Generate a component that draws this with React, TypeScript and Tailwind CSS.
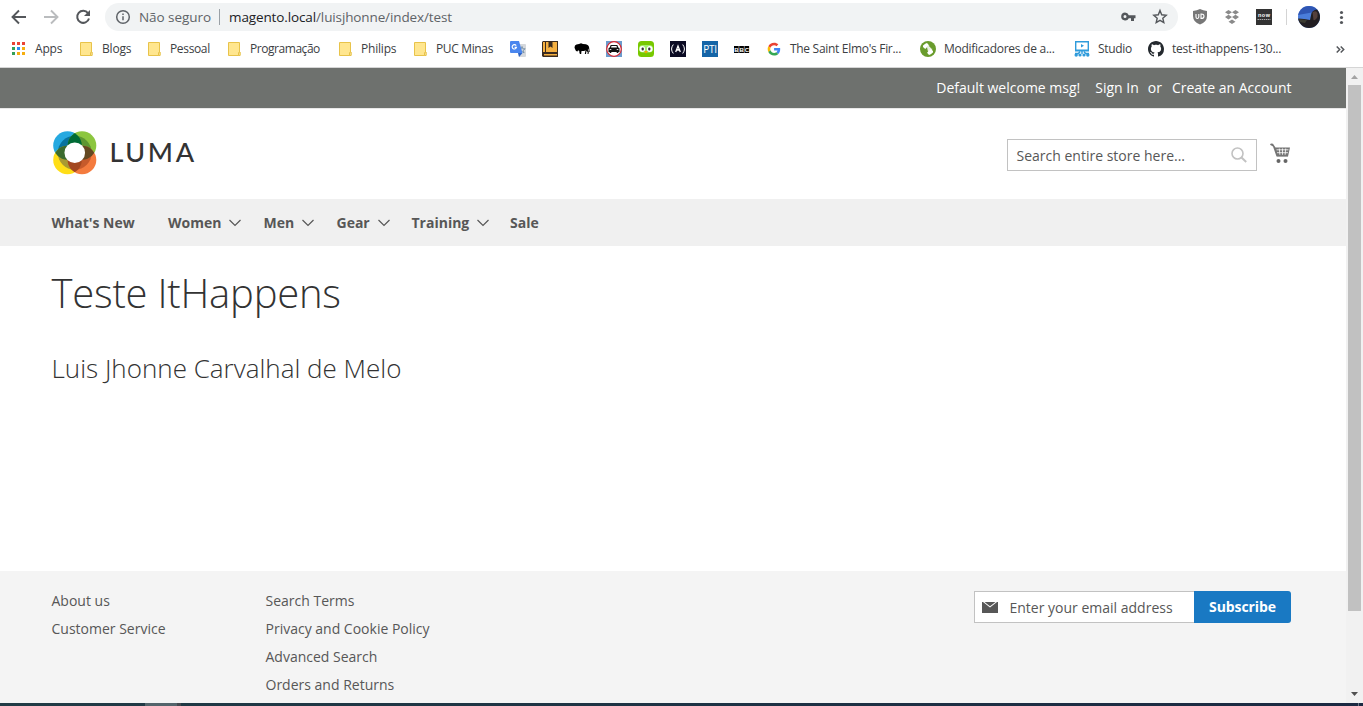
import React from "react";
import type { ReactNode } from "react";

const Folder = () => (
  <svg width="16" height="16" viewBox="0 0 16 16">
    <path d="M2.500 1.500h11v9.500l.5.5v3H2.500z" fill="#ffe68f" stroke="#e8c34a" />
    <path d="M12.500 14.500v-3l1.500-.5v3.500z" fill="#fff0b8" stroke="#e8c34a" />
  </svg>
);

const AppsIcon = () => (
  <svg width="16" height="16" viewBox="0 0 16 16">
    {["#ea4335", "#ea4335", "#ea4335", "#34a058", "#2a8bf2", "#f6ae10", "#34a058", "#f6ae10", "#f6ae10"].map((c, i) => (
      <rect key={i} x={1 + (i % 3) * 5} y={1 + Math.floor(i / 3) * 5} width="3" height="3" fill={c} />
    ))}
  </svg>
);

const Translate = () => (
  <svg width="16" height="16" viewBox="0 0 16 16">
    <path d="M6 3h9q1 0 1 1v11q0 1-1 1H9z" fill="#d5d8dc" />
    <path d="M12 5.500l.8 2.300h2.400l-2 1.500.9 2.700-2.100-1.600L9.800 12l.9-2.700-2-1.500h2.500z" fill="none" stroke="#7590a6" strokeWidth=".9" />
    <path d="M1 0h8l3.500 12H1q-1 0-1-1V1q0-1 1-1z" fill="#4a86ee" />
    <path d="M8 12h4.500L9 16z" fill="#2e63c4" />
    <path d="M6.200 4.600A2.200 2.200 0 1 0 6.500 6.400H4.600" fill="none" stroke="#fff" strokeWidth="1.100" />
  </svg>
);

const Book = () => (
  <svg width="16" height="16" viewBox="0 0 16 16">
    <path d="M1 0h15v16H1l-1-1V1z" fill="#3b2b20" />
    <path d="M4 1h11v10H4z" fill="#f5b041" />
    <path d="M1 1h2v10H1zM2 13h13v1.500H2z" fill="#f5b041" />
    <path d="M6.500 1h4v6l-2-1.500-2 1.500z" fill="#3b2b20" />
  </svg>
);

const Bison = () => (
  <svg width="16" height="16" viewBox="0 0 16 16">
    <path d="M.5 6.500l.5-2 1.500-1L5 3l2-.8 2 .8 3 .3 2 1 1 1.500.7 5.200h-.8l-.6-3.500-.5 1.500 1 2-.3 2h-1l.2-2-2-1.500-2 .5-2.500 0-.7 2.500h-1L5.300 10l-1.200-.7L3.500 10.500 2 10 1 8z" fill="#000" />
    <path d="M6 9.500h1.500L7.200 13H6zM11.500 9.500h1L12 13h-1.200z" fill="#000" />
  </svg>
);

const Car = () => (
  <svg width="16" height="16" viewBox="0 0 16 16">
    <rect width="16" height="16" fill="#6b9bcd" />
    <circle cx="8" cy="8" r="7.300" fill="#fff" stroke="#d8262e" strokeWidth="1.200" />
    <path d="M4.700 4h6.600l1 2.500 1.200.8V11h-1.200v1h-1.600v-1H5.300v1H3.700v-1H2.500V7.300l1.200-.8z" fill="#111" />
    <path d="M5.500 5h5l.5 1.500H5z" fill="#fff" />
    <path d="M3.700 8h1.600v1H3.700zM10.700 8h1.600v1h-1.600z" fill="#ddd" />
  </svg>
);

const Duo = () => (
  <svg width="16" height="16" viewBox="0 0 16 16">
    <rect width="16" height="16" rx="3.500" fill="#78c800" />
    <rect x="1" y="4" width="14" height="7.500" rx="3.700" fill="#a5ed6e" />
    <rect x="1.500" y="5" width="5.500" height="6" rx="2.700" fill="#fff" />
    <rect x="9" y="5" width="5.500" height="6" rx="2.700" fill="#fff" />
    <rect x="3.600" y="6.500" width="2.200" height="3" rx="1" fill="#333" />
    <rect x="10.200" y="6.500" width="2.200" height="3" rx="1" fill="#333" />
    <path d="M6.200 10.500Q8 9 9.800 10.500L8 12.500z" fill="#f7a400" />
  </svg>
);

const Fcc = () => (
  <svg width="16" height="16" viewBox="0 0 16 16">
    <rect width="16" height="16" fill="#0a0a23" />
    <path d="M3.300 3.500Q-.2 8 3.300 12.500M12.700 3.500Q16.200 8 12.700 12.500" fill="none" stroke="#fff" strokeWidth="1" />
    <path d="M5.700 11L8 5l2.300 6M8 8v2" fill="none" stroke="#fff" strokeWidth="1.300" />
  </svg>
);

const Pti = () => (
  <span className="flex h-4 w-4 items-center justify-center bg-[#1565a7] font-['Open_Sans',sans-serif] text-[10px] leading-none tracking-[-0.2px] text-white">PTI</span>
);

const Bbc = () => (
  <svg width="16" height="16" viewBox="0 0 16 16">
    <rect y="5" width="4.700" height="7" fill="#000" />
    <rect x="5.200" y="5" width="4.700" height="7" fill="#000" />
    <rect x="10.400" y="5" width="4.700" height="7" fill="#000" />
    <g fill="#fff" fontFamily="Liberation Sans" fontSize="6" fontWeight="700" textAnchor="middle">
      <text x="2.400" y="10.700">B</text>
      <text x="7.600" y="10.700">B</text>
      <text x="12.800" y="10.700">C</text>
    </g>
  </svg>
);

const Google = () => (
  <svg width="16" height="16" viewBox="0 0 48 48">
    <g transform="translate(5 5) scale(.8)">
      <path fill="#EA4335" d="M24 9.500c3.540 0 6.710 1.220 9.210 3.600l6.850-6.850C35.900 2.380 30.470 0 24 0 14.620 0 6.510 5.380 2.560 13.220l7.980 6.190C12.430 13.720 17.740 9.500 24 9.500z" />
      <path fill="#4285F4" d="M46.980 24.550c0-1.570-.15-3.090-.38-4.550H24v9.020h12.940c-.58 2.960-2.260 5.480-4.780 7.180l7.730 6c4.510-4.180 7.090-10.360 7.090-17.650z" />
      <path fill="#FBBC05" d="M10.530 28.590c-.48-1.450-.76-2.990-.76-4.590s.27-3.140.76-4.590l-7.980-6.190C.92 16.460 0 20.120 0 24s.92 7.540 2.560 10.780l7.970-6.190z" />
      <path fill="#34A853" d="M24 48c6.480 0 11.930-2.130 15.890-5.810l-7.730-6c-2.150 1.450-4.920 2.300-8.160 2.300-6.260 0-11.570-4.220-13.470-9.910l-7.980 6.190C6.510 42.620 14.620 48 24 48z" />
    </g>
  </svg>
);

const Swirl = () => (
  <svg width="16" height="16" viewBox="0 0 16 16">
    <circle cx="8" cy="8" r="8" fill="#6a9c2d" />
    <path d="M3 3.500l4-1.500L9 4.200 5.200 8 3 6z" fill="#fff" />
    <path d="M13 12.500L9 14l-2-2.200L10.800 8 13 10z" fill="#fff" />
    <path d="M7 6l2-1.800L12.500 8 9 11.800 7.800 10z" fill="#fff" opacity=".85" />
    <path d="M2 4.500L5 2M14 11.500L11 14M9.500 4.500l3 3M6.500 11.500l-3-3" stroke="#6a9c2d" strokeWidth="1.600" />
  </svg>
);

const Studio = () => (
  <svg width="16" height="16" viewBox="0 0 16 16">
    <path d="M1.700.7h12.600v9H1.700z" fill="#fff" stroke="#2f9bdb" strokeWidth="1.400" />
    <path d="M7 3l3 1.700-3 1.700z" fill="#2f9bdb" />
    <path d="M1 8.500h14V10H1zM7.300 9h1.400v4H7.300z" fill="#2f9bdb" />
    <path d="M1 12.500h3.500L6 10.500M15 12.500h-3.500L10 10.500" stroke="#2f9bdb" strokeWidth="1.500" fill="none" />
    <circle cx="2.200" cy="14" r="1.700" fill="#2f9bdb" />
    <circle cx="6" cy="14" r="1.600" fill="#2f9bdb" />
    <circle cx="10" cy="14" r="1.600" fill="#2f9bdb" />
    <circle cx="13.800" cy="14" r="1.700" fill="#2f9bdb" />
  </svg>
);

const Github = () => (
  <svg width="16" height="16" viewBox="0 0 16 16">
    <path fill="#24292e" d="M8 0C3.580 0 0 3.580 0 8c0 3.540 2.290 6.530 5.470 7.590.4.070.55-.17.55-.38 0-.19-.01-.82-.01-1.490-2.010.37-2.530-.49-2.690-.94-.09-.23-.48-.94-.82-1.130-.28-.15-.68-.52-.01-.53.63-.01 1.080.58 1.230.82.72 1.210 1.870.87 2.330.66.07-.52.28-.87.51-1.070-1.780-.2-3.640-.89-3.640-3.950 0-.87.31-1.590.82-2.150-.08-.2-.36-1.020.08-2.120 0 0 .67-.21 2.200.82.640-.18 1.320-.27 2-.27s1.360.09 2 .27c1.530-1.040 2.200-.82 2.200-.82.44 1.100.16 1.920.08 2.120.51.56.82 1.270.82 2.150 0 3.070-1.870 3.750-3.650 3.950.29.25.54.73.54 1.480 0 1.070-.01 1.930-.01 2.200 0 .21.15.46.55.38A8.010 8.010 0 0 0 16 8c0-4.420-3.580-8-8-8z" />
  </svg>
);

const bookmarks: { icon: ReactNode; label?: string; cls: string }[] = [
  { icon: <AppsIcon />, label: "Apps", cls: "w-[67px]" },
  { icon: <Folder />, label: "Blogs", cls: "w-[68px]" },
  { icon: <Folder />, label: "Pessoal", cls: "w-[80px] tracking-[-0.350px]" },
  { icon: <Folder />, label: "Programação", cls: "w-[111px] tracking-[-0.450px]" },
  { icon: <Folder />, label: "Philips", cls: "w-[75px]" },
  { icon: <Folder />, label: "PUC Minas", cls: "w-[98px] tracking-[-0.350px]" },
  { icon: <Translate />, cls: "w-8" },
  { icon: <Book />, cls: "w-8" },
  { icon: <Bison />, cls: "w-8" },
  { icon: <Car />, cls: "w-8" },
  { icon: <Duo />, cls: "w-8" },
  { icon: <Fcc />, cls: "w-8" },
  { icon: <Pti />, cls: "w-8" },
  { icon: <Bbc />, cls: "w-8" },
  { icon: <Google />, label: "The Saint Elmo's Fir...", cls: "w-[154px] tracking-[-0.300px]" },
  { icon: <Swirl />, label: "Modificadores de a...", cls: "w-[154px] tracking-[-0.270px]" },
  { icon: <Studio />, label: "Studio", cls: "w-[74px] tracking-[-0.300px]" },
  { icon: <Github />, label: "test-ithappens-130...", cls: "w-[188px] tracking-[-0.260px]" },
];

const Toolbar = () => (
  <div className="flex h-[34px] shrink-0 items-center">
    <svg className="shrink-0" width="105" height="34" viewBox="0 0 105 34" fill="none" strokeWidth="1.900">
      <path d="M26 17H13M19 10.500L12.500 17l6.500 6.500" stroke="#54575b" />
      <path d="M44 17h13M51 10.500l6.500 6.500-6.500 6.500" stroke="#babcbe" />
      <path d="M88 13.200A6 6 0 1 0 89 18.500" stroke="#54575b" strokeWidth="2" />
      <path d="M90 10v6h-6z" fill="#54575b" />
    </svg>
    <div className="mb-[1px] flex h-7 w-[1073px] shrink-0 items-center rounded-full bg-[#f1f3f4] pl-[10px] font-['Open_Sans',sans-serif] text-[13.500px]">
      <svg className="shrink-0" width="16" height="16" viewBox="0 0 16 16" fill="none" stroke="#5f6368" strokeWidth="1.500">
        <circle cx="8" cy="8" r="6.300" />
        <path d="M8 7.200v4M8 4.500V6" />
      </svg>
      <span className="ml-2 w-[72px] shrink-0 pt-[2px] tracking-[-0.050px] whitespace-nowrap text-[#5f6368]">Não seguro</span>
      <span className="ml-2 h-4 w-px shrink-0 bg-[#9aa0a6]" />
      <span className="ml-[9px] pt-[2px] tracking-[-0.120px] whitespace-nowrap text-[#5f6368]"><span className="text-[#202124]">magento.local</span>/luisjhonne/index/test</span>
      <span className="grow" />
      <svg className="shrink-0" width="58" height="28" viewBox="0 0 58 28">
        <path fillRule="evenodd" d="M5 9.500a4 4 0 0 1 3.800 2.700H15.500v3H14V18h-3v-2.800H8.800A4 4 0 1 1 5 9.500zm0 2.600a1.500 1.500 0 1 0 0 3 1.500 1.500 0 0 0 0-3z" fill="#54575b" />
        <path d="M40 7.500l1.700 4.300 4.500.4-3.400 3 1 4.400-3.800-2.300-3.800 2.300 1-4.400-3.400-3 4.500-.4z" fill="none" stroke="#54575b" strokeWidth="1.400" />
      </svg>
    </div>
    <svg className="shrink-0" width="185" height="34" viewBox="1178 0 185 34">
      <path d="M1193 11q4-.5 7-2 3 1.500 7 2v5q0 6-7 8.500-7-2.500-7-8.500z" fill="#777" />
      <path d="M1196 14v3q0 1.500 1.300 1.500t1.500-1.500v-3M1201 14v4.500q3 0 3-2.300t-3-2.200z" fill="none" stroke="#fff" strokeWidth="1.100" />
      <path d="M1228.500 10l3.500 2.300-3.500 2.300-3.500-2.300zM1235.500 10l3.500 2.300-3.500 2.300-3.500-2.300zM1228.500 14.800l3.500 2.300-3.500 2.300-3.500-2.300zM1235.500 14.800l3.500 2.300-3.500 2.300-3.500-2.300zM1232 19.500l3.500 2.300-3.500 2.300-3.500-2.300z" fill="#8a8a8a" />
      <rect x="1256" y="9" width="16" height="16" fill="#333" />
      <text x="1258" y="17" fill="#fff" fontSize="5.500" fontWeight="700" fontFamily="Liberation Sans" textLength="12">now</text>
      <path d="M1257.500 19.500h13" stroke="#aaa" strokeDasharray="1.500 .6" />
      <path d="M1286.500 9v16" stroke="#d4d4d4" />
      <clipPath id="face"><circle cx="1309" cy="17" r="11" /></clipPath>
      <g clipPath="url(#face)">
        <rect x="1298" y="6" width="22" height="22" fill="#4a7ddb" />
        <path d="M1298 6h22v5l-22 4z" fill="#2f56b4" />
        <path d="M1298 18.500l6 .5 6 1 1.500-7q3-5 8.500-3v18h-22z" fill="#221e22" />
        <path d="M1312.500 12q4-2 5 1v4q-2 4-4 3z" fill="#54403c" />
        <path d="M1299 19l8 1-2 3-5-1z" fill="#3c3b31" />
      </g>
      <g fill="#54575b"><circle cx="1341.500" cy="12.500" r="1.600" /><circle cx="1341.500" cy="17.500" r="1.600" /><circle cx="1341.500" cy="22.500" r="1.600" /></g>
    </svg>
  </div>
);

const BookmarkBar = () => (
  <div className="flex h-[34px] shrink-0 items-center border-b border-[#d5d5d5] pb-1 pl-[11px] font-['Open_Sans',sans-serif] text-[12px] tracking-[-0.200px] text-[#3c4043]">
    {bookmarks.map((b, i) => (
      <div key={i} className={`flex shrink-0 items-center ${b.cls}`}>
        <span className="flex h-4 w-4 shrink-0 items-center">{b.icon}</span>
        {b.label && <span className="ml-2 pt-px whitespace-nowrap">{b.label}</span>}
      </div>
    ))}
    <svg className="mt-px" width="9" height="9" viewBox="0 0 9 9" fill="none" stroke="#54575b" strokeWidth="1.500"><path d="M.7 1.500l3 3-3 3M4.700 1.500l3 3-3 3" /></svg>
  </div>
);

const Logo = () => (
  <div className="flex h-[43px] items-center">
    <svg width="44" height="44" viewBox="0 0 44 44">
      <defs>
        <clipPath id="ctl"><circle cx="14.500" cy="14.500" r="14.300" /></clipPath>
        <clipPath id="ctr"><circle cx="29" cy="14.500" r="14.300" /></clipPath>
        <clipPath id="cbl"><circle cx="14.500" cy="29" r="14.300" /></clipPath>
        <clipPath id="cbr"><circle cx="29" cy="29" r="14.300" /></clipPath>
      </defs>
      <circle cx="14.500" cy="14.500" r="14.300" fill="#26a9e0" />
      <circle cx="29" cy="14.500" r="14.300" fill="#8cc63f" />
      <circle cx="14.500" cy="29" r="14.300" fill="#ffde17" />
      <circle cx="29" cy="29" r="14.300" fill="#f47b3e" />
      <g clipPath="url(#ctl)"><circle cx="21.750" cy="21.750" r="17" fill="#08739f" /></g>
      <g clipPath="url(#ctr)"><circle cx="21.750" cy="21.750" r="17" fill="#5d9632" /></g>
      <g clipPath="url(#cbl)"><circle cx="21.750" cy="21.750" r="17" fill="#a99a32" /></g>
      <g clipPath="url(#cbr)"><circle cx="21.750" cy="21.750" r="17" fill="#c65a2b" /></g>
      <g clipPath="url(#ctl)">
        <circle cx="29" cy="14.500" r="14.300" fill="#006b36" />
        <circle cx="14.500" cy="29" r="14.300" fill="#3b6b2e" />
      </g>
      <g clipPath="url(#cbr)">
        <circle cx="29" cy="14.500" r="14.300" fill="#644821" />
        <circle cx="14.500" cy="29" r="14.300" fill="#a44820" />
      </g>
      <circle cx="21.750" cy="21.750" r="10.300" fill="#fff" />
    </svg>
    <span className="-mt-[3px] ml-[13px] font-['Lato',sans-serif] text-[27px] leading-none font-medium tracking-[2.600px] text-[#333]">LUMA</span>
  </div>
);

const Chevron = () => (
  <svg className="mt-px ml-2 shrink-0" width="12" height="8" viewBox="0 0 12 8" fill="none" stroke="#575757" strokeWidth="1.200"><path d="M.5 1l5.500 5.500L11.500 1" /></svg>
);

const nav = [
  { label: "What's New", cls: "w-[116.5px]" },
  { label: "Women", cls: "w-[95.5px]", sub: true },
  { label: "Men", cls: "w-[73px]", sub: true },
  { label: "Gear", cls: "w-[75px]", sub: true },
  { label: "Training", cls: "w-[98.5px]", sub: true },
  { label: "Sale", cls: "w-[40px]" },
];

const Store = () => (
  <div className="flex w-[1346px] shrink-0 flex-col bg-white font-['Open_Sans',sans-serif] text-[14px] text-[#575757]">
    <div className="flex h-10 shrink-0 items-center bg-[#6e716e] pr-[54.5px] pb-[2px] whitespace-nowrap text-white">
      <span className="ml-auto">Default welcome msg!</span>
      <span className="ml-[15px]">Sign In</span>
      <span className="ml-[9px]">or</span>
      <span className="ml-[10px]">Create an Account</span>
    </div>
    <header className="flex h-[91px] shrink-0 items-start border-t border-[#e8e8e8] pl-[52.5px]">
      <div className="mt-[22px]"><Logo /></div>
      <div className="mt-[30px] mr-[13px] ml-auto flex h-8 w-[250px] items-center border border-[#c2c2c2] pr-[9px] pl-[8.5px]">
        <span className="grow whitespace-nowrap">Search entire store here...</span>
        <svg width="16" height="16" viewBox="0 0 16 16" fill="none" stroke="#c2c2c2"><circle cx="6.500" cy="6.500" r="5.500" strokeWidth="1.600" /><path d="M10.500 10.500l4.700 4.500" strokeWidth="2" /></svg>
      </div>
      <svg className="mt-[34px] mr-[56px]" width="20" height="21" viewBox="0 0 20 21">
        <path d="M0 1.800Q.5 0 3 .8L5.500 4.500H20l-2 9H6.500L3 3.500z" fill="#757575" />
        <path d="M6.500 6.800h12M7 9.700h11M9.300 5.500l.6 6.500M12.500 5.500V12M15.700 5.500l-.6 6.500" stroke="#fff" strokeWidth=".8" />
        <path d="M7 12.500h11" stroke="#757575" strokeWidth="1.500" />
        <circle cx="8.500" cy="18" r="2" fill="#666" /><circle cx="15.500" cy="18" r="2" fill="#666" />
      </svg>
    </header>
    <nav className="flex h-[47px] shrink-0 items-center bg-[#f0f0f0] pl-[51.5px] font-bold">
      {nav.map((n) => (
        <span key={n.label} className={`flex shrink-0 items-center whitespace-nowrap ${n.cls}`}>{n.label}{n.sub && <Chevron />}</span>
      ))}
    </nav>
    <main className="flex h-[325px] shrink-0 flex-col pl-[51.5px] font-light text-[#333]">
      <h1 className="mt-[25px] text-[40px] leading-[44px] tracking-[-0.220px]">Teste ItHappens</h1>
      <h2 className="mt-[39px] text-[26px] leading-[29px]">Luis Jhonne Carvalhal de Melo</h2>
    </main>
    <footer className="flex h-[132px] shrink-0 items-start overflow-hidden bg-[#f4f4f4] pt-5 pr-[55px] pl-[51.5px] leading-5">
      <div className="flex w-[214px] flex-col gap-2"><span>About us</span><span>Customer Service</span></div>
      <div className="flex flex-col gap-2"><span>Search Terms</span><span>Privacy and Cookie Policy</span><span>Advanced Search</span><span>Orders and Returns</span></div>
      <div className="ml-auto flex h-8">
        <div className="flex w-[220px] items-center border border-r-0 border-[#c2c2c2] bg-white pl-[7px]">
          <svg width="16" height="11" viewBox="0 0 16 11"><path d="M0 0h1l7 5.500L15 0h1v11H0z" fill="#575757" /><path d="M2.500 0h11L8 4.300z" fill="#575757" /></svg>
          <span className="ml-[11.5px] pt-px whitespace-nowrap">Enter your email address</span>
        </div>
        <div className="flex w-[97px] items-center justify-center rounded-r-[3px] bg-[#1979c3] font-bold tracking-[-0.100px] text-white">Subscribe</div>
      </div>
    </footer>
  </div>
);

const Scrollbar = () => (
  <div className="flex w-[17px] shrink-0 flex-col items-center bg-[#f1f1f1]">
    <svg className="shrink-0" width="17" height="17" viewBox="0 0 17 17"><path d="M5 11l3.500-4 3.500 4z" fill="#a3a3a3" /></svg>
    <div className="h-[526px] w-[13px] shrink-0 bg-[#c1c1c1]" />
    <span className="grow" />
    <svg className="shrink-0" width="17" height="17" viewBox="0 0 17 17"><path d="M5 6l3.500 4L12 6z" fill="#505050" /></svg>
  </div>
);

export default function App() {
  return (
    <div className="flex h-[706px] w-[1363px] flex-col overflow-hidden bg-white">
      <Toolbar />
      <BookmarkBar />
      <div className="flex h-[635px] shrink-0">
        <Store />
        <Scrollbar />
      </div>
      <div className="flex h-[3px] shrink-0 bg-gradient-to-r from-[#203b45] to-[#1b2942]">
        <span className="ml-[145px] w-8 bg-[#53646b]" />
        <span className="w-1 bg-[#43484f]" />
        <span className="mr-1 ml-auto w-px bg-[#6d7686]" />
      </div>
    </div>
  );
}
